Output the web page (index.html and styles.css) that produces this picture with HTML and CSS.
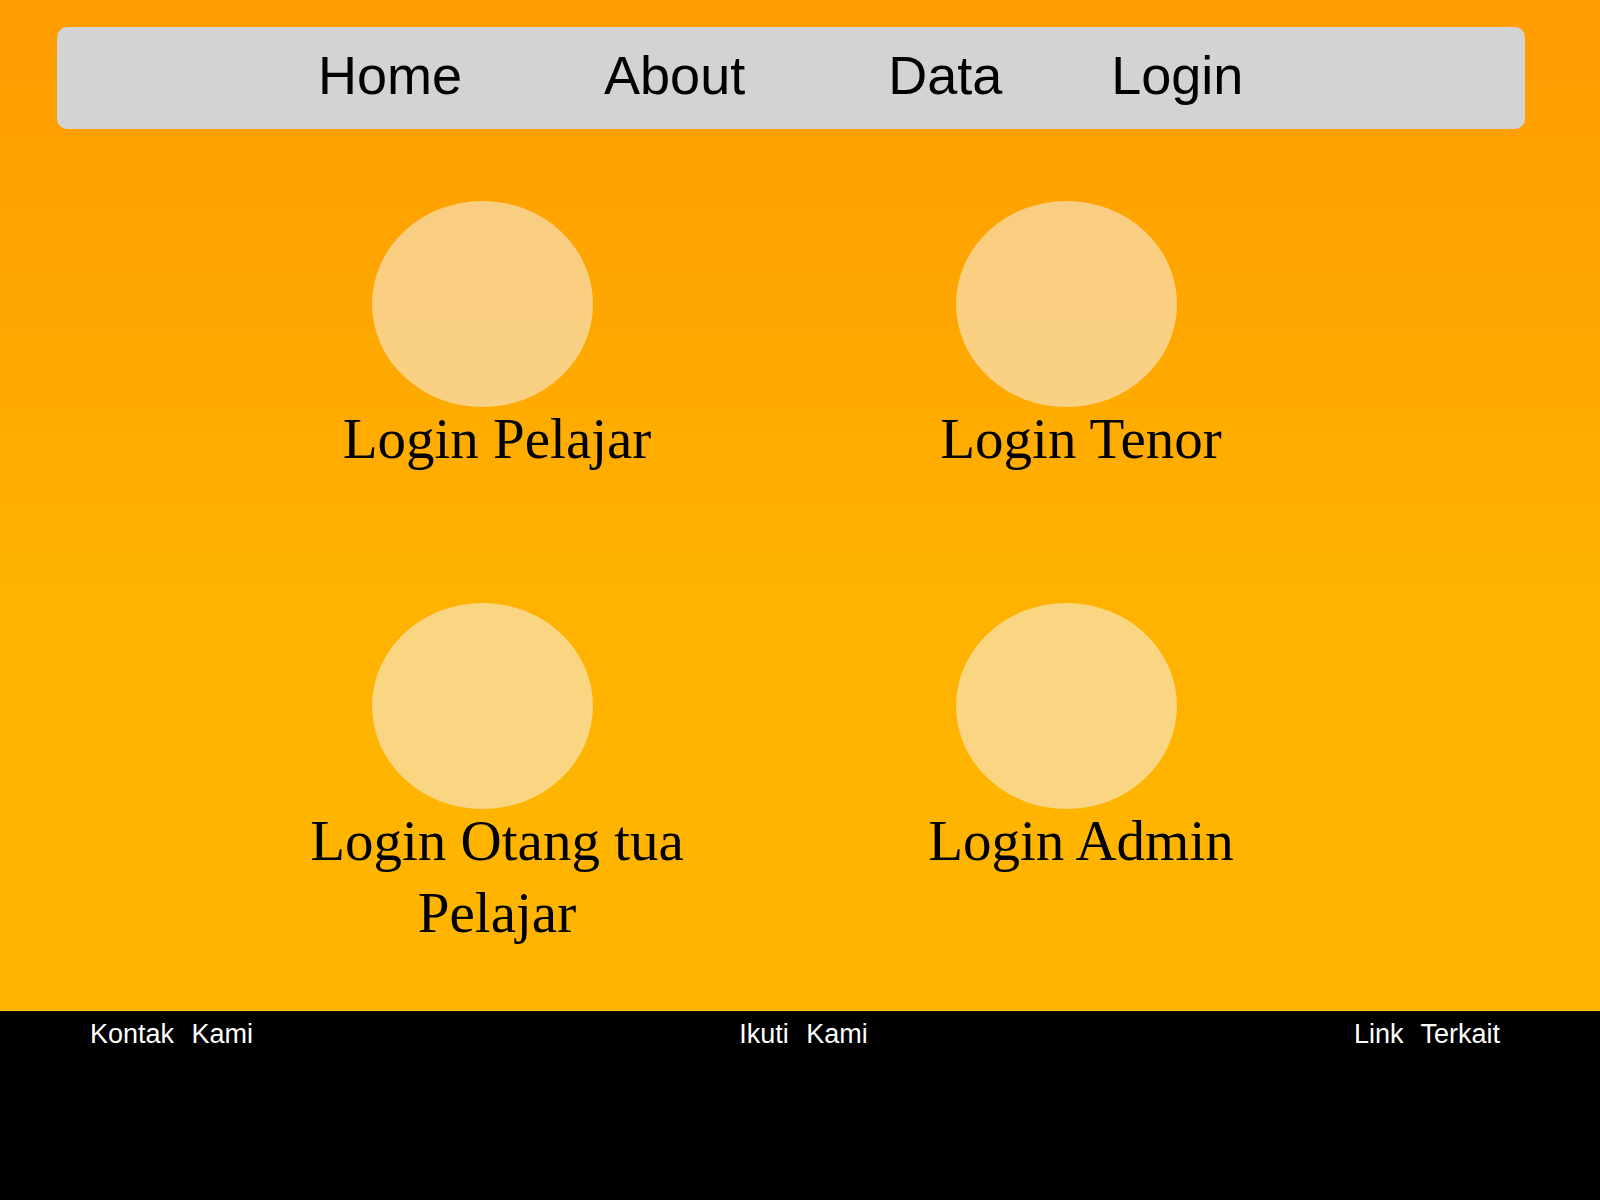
FILE: index.html
```html
<!DOCTYPE html>
<html lang="id">
<head>
<meta charset="utf-8">
<title>Login</title>
<link rel="stylesheet" href="styles.css">
</head>
<body>
<div class="page">
  <nav class="nav">
    <ul class="nav-list">
      <li class="nav-item nav-home">Home</li>
      <li class="nav-item nav-about">About</li>
      <li class="nav-item nav-data">Data</li>
      <li class="nav-item nav-login">Login</li>
    </ul>
  </nav>
  <main class="grid">
    <div class="cell">
      <div class="avatar"></div>
      <div class="label">Login Pelajar</div>
    </div>
    <div class="cell">
      <div class="avatar"></div>
      <div class="label">Login Tenor</div>
    </div>
    <div class="cell">
      <div class="avatar"></div>
      <div class="label">Login Otang tua Pelajar</div>
    </div>
    <div class="cell">
      <div class="avatar"></div>
      <div class="label">Login Admin</div>
    </div>
  </main>
</div>
<footer class="footer">
  <span class="foot-item">Kontak Kami</span>
  <span class="foot-item">Ikuti Kami</span>
  <span class="foot-item">Link Terkait</span>
</footer>
</body>
</html>
```
FILE: styles.css
```css
html, body {
  margin: 0;
  padding: 0;
}
body {
  width: 1600px;
  height: 1200px;
  overflow: hidden;
  display: flex;
  flex-direction: column;
  font-family: "Liberation Sans", Arial, sans-serif;
}
.page {
  height: 1011px;
  flex: none;
  background: linear-gradient(to bottom, #ff9c00 0%, #ffa600 30%, #ffb200 58%, #ffb600 100%);
  padding-top: 27px;
  box-sizing: border-box;
}
.nav {
  margin: 0 75px 0 57px;
  height: 102px;
  background: #d3d3d3;
  border-radius: 10px;
  box-sizing: border-box;
  padding: 16px 0 0 261px;
}
.nav-list {
  list-style: none;
  margin: 0;
  padding: 0;
  display: flex;
}
.nav-item {
  font-size: 54px;
  line-height: 64px;
  color: #000;
}
.nav-home { margin-right: 142px; }
.nav-about { margin-right: 143px; }
.nav-data { margin-right: 109px; }

.grid {
  display: grid;
  grid-template-columns: 480px 480px;
  column-gap: 104px;
  row-gap: 128px;
  padding-left: 257px;
  margin-top: 72px;
}
.cell {
  display: flex;
  flex-direction: column;
}
.avatar {
  width: 221px;
  height: 206px;
  border-radius: 50%;
  background: rgba(246, 246, 250, 0.52);
  margin-left: 115px;
}
.label {
  margin-top: -4px;
  font-family: "Liberation Serif", "Times New Roman", serif;
  font-size: 57px;
  line-height: 72px;
  text-align: center;
  color: #000;
}
.footer {
  flex: 1;
  background: #000;
  color: #fff;
  display: flex;
  justify-content: space-between;
  align-items: flex-start;
  padding: 8px 100px 0 90px;
  font-size: 27px;
  line-height: 30px;
  word-spacing: 10px;
}
```
